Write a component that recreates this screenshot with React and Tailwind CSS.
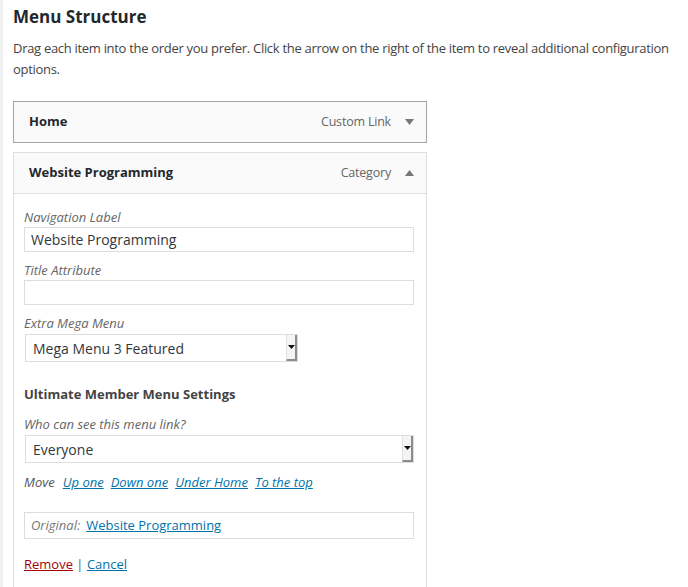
import React from "react";

function SelectArrow() {
  return (
    <div className="flex h-full w-[11px] items-center justify-center border-r-2 border-b-2 border-[#8c8c8c] bg-[#f4f4f4] border-l border-l-[#e0e0e0]">
      <svg width="7" height="4" viewBox="0 0 7 4"><path d="M0 0h7L3.5 4z" fill="#111" /></svg>
    </div>
  );
}

export default function App() {
  return (
    <div className="flex min-h-[587px] bg-white text-[#444]" style={{ fontFamily: '"Open Sans", "Noto Sans", sans-serif' }}>
      <div className="w-[3px] shrink-0 bg-[#f1f1f1]" />
      <div className="flex-1 pl-[10px] pr-[2px]">
        <h3 className="mt-[5px] text-[17px] font-bold leading-[24px] text-[#23282d]">Menu Structure</h3>
        <p className="mt-[9px] text-[13px] leading-[21px] text-[#444] tracking-[-0.3px]">
          Drag each item into the order you prefer. Click the arrow on the right of the item to reveal additional configuration options.
        </p>
        <div className="mt-[21px] w-[414px]">
          <div className="flex h-[42px] items-center border border-[#a0a5aa] bg-[#fafafa] pl-[15px] pr-[12px]">
            <span className="flex-1 text-[13px] font-bold text-[#23282d]">Home</span>
            <span className="text-[12.5px] tracking-[-0.2px] text-[#666]">Custom Link</span>
            <svg className="ml-[14px]" width="9" height="6" viewBox="0 0 9 6"><path d="M0 0h9L4.5 6z" fill="#72777c" /></svg>
          </div>
          <div className="mt-[9px] border border-b-0 border-[#dfdfdf]">
            <div className="flex h-[41px] items-center border-b border-[#dfdfdf] bg-[#fafafa] pl-[15px] pr-[12px]">
              <span className="flex-1 text-[13px] font-bold text-[#23282d]">Website Programming</span>
              <span className="text-[12.5px] tracking-[-0.2px] text-[#666]">Category</span>
              <svg className="ml-[14px]" width="9" height="6" viewBox="0 0 9 6"><path d="M0 6h9L4.5 0z" fill="#72777c" /></svg>
            </div>
            <div className="pl-[10px] pr-[12px] pt-[14px] pb-[14px]">
              <label className="block text-[13px] italic leading-[18px] text-[#666]">Navigation Label</label>
              <div className="mt-[1px] flex h-[25px] items-center border border-[#ddd] px-[6px] text-[14px] text-[#32373c]">Website Programming</div>
              <label className="mt-[9px] block text-[13px] italic leading-[18px] text-[#666]">Title Attribute</label>
              <div className="mt-[1px] h-[25px] border border-[#ddd]" />
              <label className="mt-[9px] block text-[13px] italic leading-[18px] text-[#666]">Extra Mega Menu</label>
              <div className="ml-px mt-[2px] flex h-[28px] w-[273px] items-center border border-[#ddd] pl-[7px] text-[14px] text-[#32373c]">
                <span className="flex-1">Mega Menu 3 Featured</span>
                <div className="h-[26px]"><SelectArrow /></div>
              </div>
              <div className="mt-[23px] text-[13px] font-bold leading-[18px] text-[#444]">Ultimate Member Menu Settings</div>
              <label className="mt-[12px] block text-[13px] italic leading-[18px] text-[#666]">Who can see this menu link?</label>
              <div className="ml-px mt-[2px] flex h-[28px] items-center border border-[#ddd] pl-[7px] text-[14px] text-[#32373c]">
                <span className="flex-1">Everyone</span>
                <div className="h-[26px]"><SelectArrow /></div>
              </div>
              <div className="mt-[10px] flex gap-[7px] text-[13px] italic leading-[18px]">
                <span className="mr-[1px] text-[#555]">Move</span>
                <a className="text-[#0073aa] underline">Up one</a>
                <a className="text-[#0073aa] underline">Down one</a>
                <a className="text-[#0073aa] underline">Under Home</a>
                <a className="text-[#0073aa] underline">To the top</a>
              </div>
              <div className="mt-[21px] flex h-[27px] items-center border border-[#ddd] px-[6px] text-[13px]">
                <span className="italic text-[#777]">Original:</span>
                <a className="ml-[6px] text-[#0073aa] underline">Website Programming</a>
              </div>
              <div className="mt-[16px] text-[13px] leading-[18px]">
                <a className="text-[#a00] underline">Remove</a>
                <span className="text-[#666]"> | </span>
                <a className="text-[#0073aa] underline">Cancel</a>
              </div>
            </div>
          </div>
        </div>
      </div>
    </div>
  );
}
